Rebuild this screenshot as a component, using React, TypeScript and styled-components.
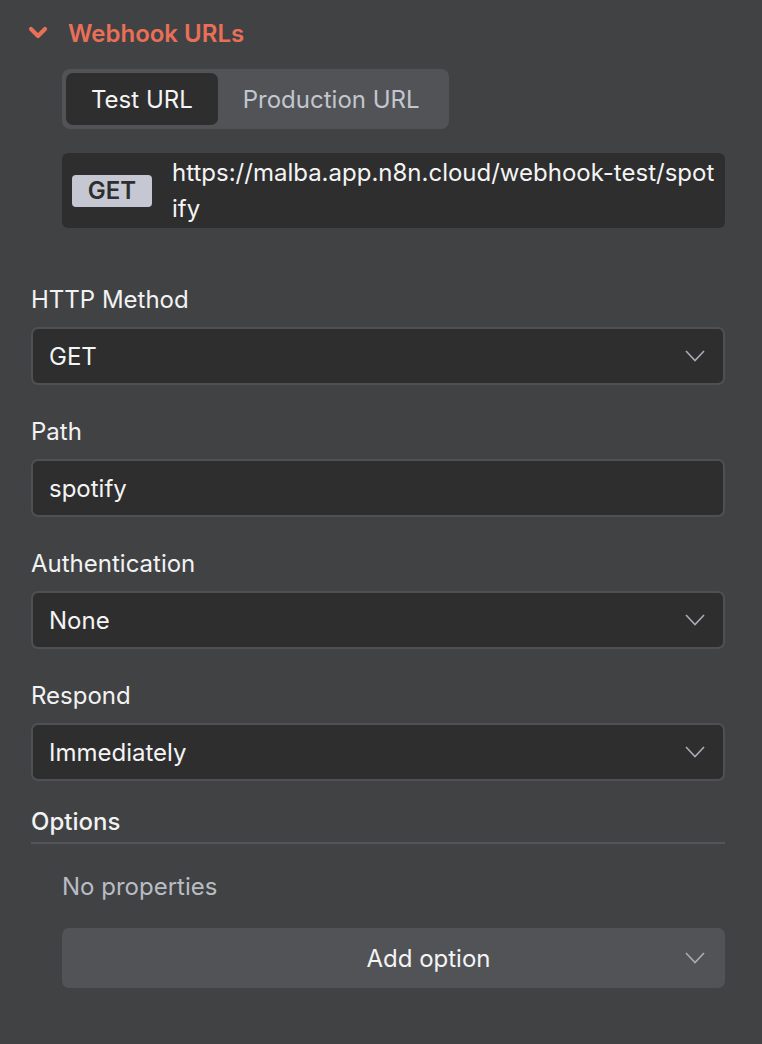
import React from 'react';
import styled, { createGlobalStyle } from 'styled-components';

const GlobalStyle = createGlobalStyle`
  html, body {
    margin: 0;
    padding: 0;
    background: #414244;
  }
  body {
    font-family: Inter, "Open Sans", sans-serif;
    -webkit-font-smoothing: antialiased;
  }
`;

const Panel = styled.div`
  width: 762px;
  min-height: 1044px;
  box-sizing: border-box;
  background: #414244;
  padding: 18px 37px 0 31px;
  color: #f2f2f3;
  font-size: 24px;
`;

const Header = styled.div`
  display: flex;
  align-items: center;
  height: 30px;
  margin-left: -3px;
  gap: 20px;
  color: #ea6f58;
  font-weight: 600;
`;

const Indented = styled.div`
  padding-left: 31px;
`;

const Toggle = styled.div`
  display: inline-flex;
  margin-top: 21px;
  padding: 4px;
  background: #525356;
  border-radius: 8px;
`;

const Tab = styled.div<{ $active?: boolean }>`
  height: 52px;
  display: flex;
  align-items: center;
  padding: 0 25px;
  border-radius: 7px;
  background: ${(p) => (p.$active ? '#2e2e2e' : 'transparent')};
  color: ${(p) => (p.$active ? '#f4f4f5' : '#c3c6cf')};
`;

const UrlBox = styled.div`
  margin-top: 24px;
  display: flex;
  align-items: center;
  gap: 20px;
  background: #2e2e2e;
  border-radius: 6px;
  padding: 0 10px;
  height: 75px;
`;

const MethodBadge = styled.span`
  flex: none;
  width: 80px;
  height: 32px;
  border-radius: 4px;
  background: #c5c8d3;
  color: #2e2e2e;
  font-weight: 600;
  display: flex;
  align-items: center;
  justify-content: center;
`;

const UrlText = styled.span`
  word-break: break-all;
  line-height: 36px;
  color: #f4f4f5;
`;

const Field = styled.div<{ $first?: boolean }>`
  margin-top: ${(p) => (p.$first ? '57px' : '32px')};
`;

const Label = styled.div`
  height: 30px;
  line-height: 30px;
  margin-bottom: 12px;
  color: #f2f2f3;
`;

const Input = styled.div`
  height: 58px;
  box-sizing: border-box;
  border: 2px solid #4f5053;
  border-radius: 7px;
  background: #2e2e2e;
  display: flex;
  align-items: center;
  padding: 0 18px 0 16px;
  color: #f4f4f5;
`;

const Value = styled.span`
  flex: 1;
`;

const SectionTitle = styled.div`
  margin-top: 26px;
  height: 30px;
  line-height: 30px;
  font-weight: 500;
  padding-bottom: 5px;
  border-bottom: 2px solid #545558;
`;

const Empty = styled.div`
  margin-top: 28px;
  height: 30px;
  line-height: 30px;
  color: #b9bcc5;
`;

const AddButton = styled.div`
  margin-top: 26px;
  height: 60px;
  border-radius: 7px;
  background: #525356;
  display: flex;
  align-items: center;
  padding: 0 20px 0 110px;
  color: #f4f4f5;
`;

const Centered = styled.span`
  flex: 1;
  text-align: center;
`;

const Chevron = () => (
  <svg width="20" height="12" viewBox="0 0 20 12" fill="none">
    <polyline points="1,1 10,10.5 19,1" stroke="#a9acb5" strokeWidth="1.6" />
  </svg>
);

const BoldChevron = () => (
  <svg width="20" height="14" viewBox="0 0 20 14" fill="none">
    <polyline
      points="3,3 10,10 17,3"
      stroke="#ea6f58"
      strokeWidth="4.2"
      strokeLinecap="round"
      strokeLinejoin="round"
    />
  </svg>
);

const fields = [
  { label: 'HTTP Method', value: 'GET', select: true },
  { label: 'Path', value: 'spotify', select: false },
  { label: 'Authentication', value: 'None', select: true },
  { label: 'Respond', value: 'Immediately', select: true },
];

export default function App() {
  return (
    <>
      <GlobalStyle />
      <Panel>
        <Header>
          <BoldChevron />
          <span>Webhook URLs</span>
        </Header>
        <Indented>
          <Toggle>
            <Tab $active>Test URL</Tab>
            <Tab>Production URL</Tab>
          </Toggle>
          <UrlBox>
            <MethodBadge>GET</MethodBadge>
            <UrlText>https://malba.app.n8n.cloud/webhook-test/spotify</UrlText>
          </UrlBox>
        </Indented>
        {fields.map((f, i) => (
          <Field key={f.label} $first={i === 0}>
            <Label>{f.label}</Label>
            <Input>
              <Value>{f.value}</Value>
              {f.select && <Chevron />}
            </Input>
          </Field>
        ))}
        <SectionTitle>Options</SectionTitle>
        <Indented>
          <Empty>No properties</Empty>
          <AddButton>
            <Centered>Add option</Centered>
            <Chevron />
          </AddButton>
        </Indented>
      </Panel>
    </>
  );
}
